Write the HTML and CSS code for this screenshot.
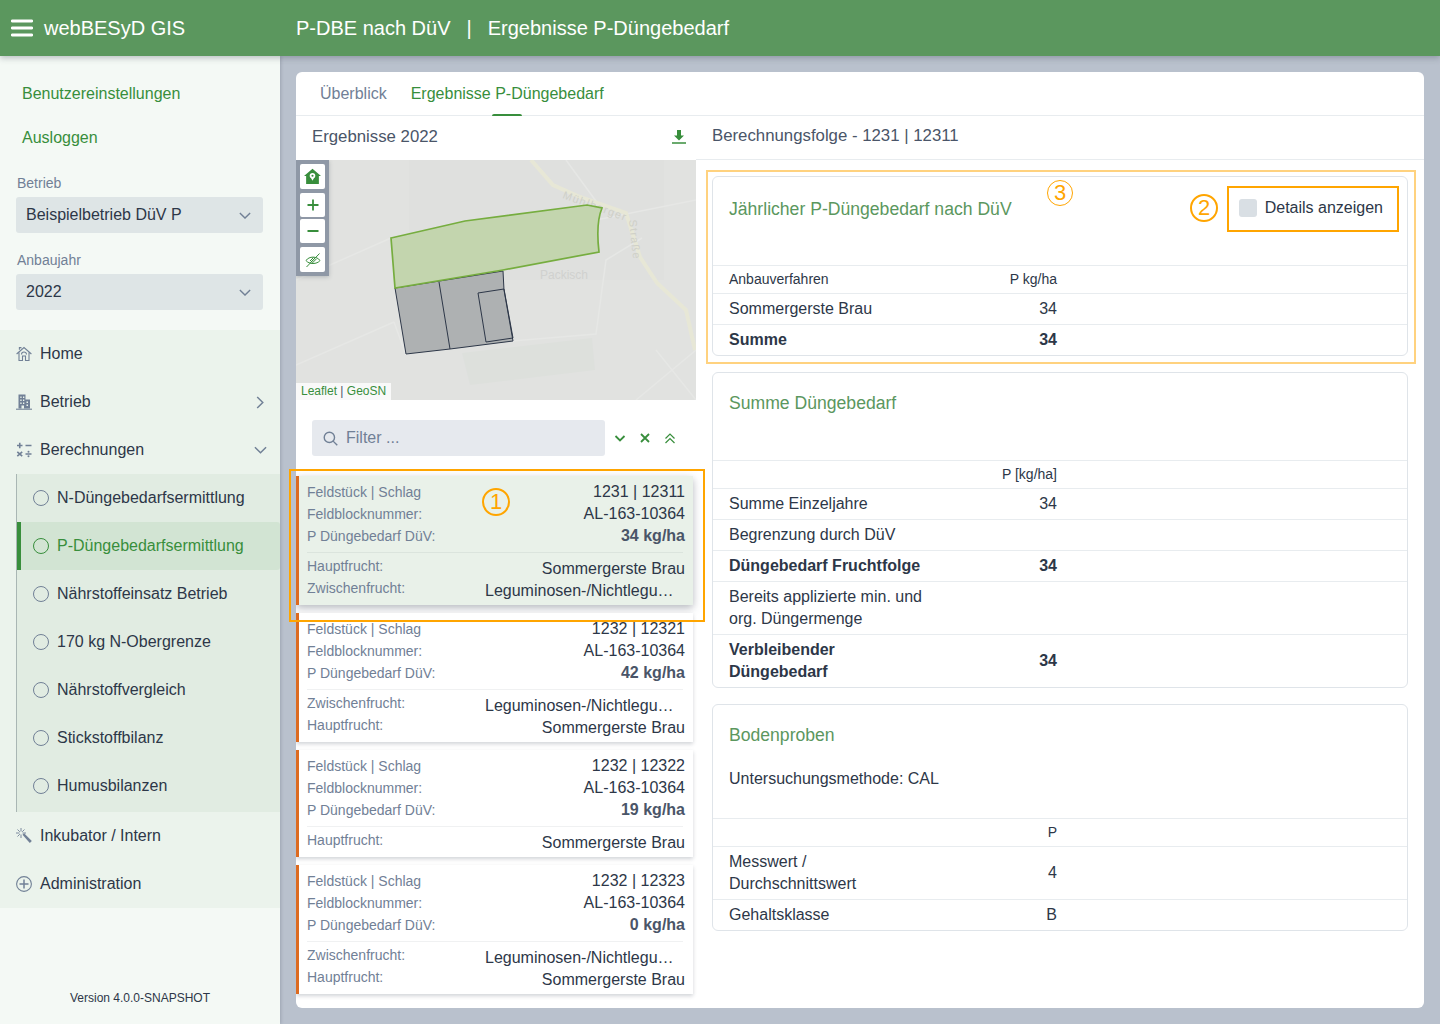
FILE: index.html
```html
<!DOCTYPE html>
<html lang="de">
<head>
<meta charset="utf-8">
<title>webBESyD GIS</title>
<link rel="stylesheet" href="styles.css">
</head>
<body>
<div class="app">
  <header class="topbar">
    <div class="brand">
      <svg class="burger" viewBox="0 0 22 18" width="22" height="18"><path d="M1.2 2h19.6M1.2 9h19.6M1.2 16h19.6" fill="none" stroke="#fff" stroke-width="2.8" stroke-linecap="round"/></svg>
      <span>webBESyD GIS</span>
    </div>
    <div class="crumbs"><span>P-DBE nach DüV</span><span class="sep">|</span><span>Ergebnisse P-Düngebedarf</span></div>
  </header>
  <div class="body">
    <aside class="sidebar">
      <a class="user-link first">Benutzereinstellungen</a>
      <a class="user-link">Ausloggen</a>
      <label class="field-label">Betrieb</label>
      <div class="select"><span>Beispielbetrieb DüV P</span><svg viewBox="0 0 14 8" width="12" height="7"><path d="M1 1l6 6 6-6" fill="none" stroke="#718096" stroke-width="1.6"/></svg></div>
      <label class="field-label second">Anbaujahr</label>
      <div class="select"><span>2022</span><svg viewBox="0 0 14 8" width="12" height="7"><path d="M1 1l6 6 6-6" fill="none" stroke="#718096" stroke-width="1.6"/></svg></div>
      <nav class="nav">
        <div class="nav-item">
          <svg class="nav-icon" viewBox="0 0 16 16"><path d="M.6 8L8 1.600 15.400 8M3 6.400V14.500h3.500V10h3v4.500H13V6.400M3.400 3.800V1.500h1.500v1M5.500 8.500a2.500 2.500 0 0 1 5 0" fill="none" stroke="#718096" stroke-width="1.100"/></svg>
          <span>Home</span>
        </div>
        <div class="nav-item">
          <svg class="nav-icon" viewBox="0 0 16 16"><path d="M2.500 .5h7v5H14v9H2.500z" fill="#718096"/><path d="M0 15.200h16" stroke="#718096" stroke-width="1.100"/><path d="M4.300 2.500h1.300V4H4.300zM7 2.500h1.300V4H7zM4.300 5.500h1.300V7H4.300zM7 5.500h1.300V7H7zM10.500 7.500h1.500V9h-1.500zM4.300 8.500h1.300V10H4.300zM7 8.500h1.300V10H7zM10.500 10.500h1.500V12h-1.500zM5.500 11.500h2.500v3H5.500z" fill="#ebf3ec"/></svg>
          <span>Betrieb</span>
          <svg class="chev-right" viewBox="0 0 8 14" width="8" height="13"><path d="M1 1l6 6-6 6" fill="none" stroke="#718096" stroke-width="1.600"/></svg>
        </div>
        <div class="nav-item">
          <svg class="nav-icon" viewBox="0 0 16 16"><path d="M1 3.500h5.500M3.750 .8v5.400M9.500 3.500h6M1.300 9.800l4.900 4.400M6.200 9.800l-4.900 4.400M9.500 12h6" fill="none" stroke="#718096" stroke-width="1.600"/><circle cx="12.500" cy="9.800" r="1" fill="#718096"/><circle cx="12.500" cy="14.200" r="1" fill="#718096"/></svg>
          <span>Berechnungen</span>
          <svg class="chev-down" viewBox="0 0 14 8" width="13" height="8"><path d="M1 1l6 6 6-6" fill="none" stroke="#718096" stroke-width="1.600"/></svg>
        </div>
        <div class="subnav">
          <div class="sub-item"><i class="ring"></i><span>N-Düngebedarfsermittlung</span></div>
          <div class="sub-item active"><i class="ring"></i><span>P-Düngebedarfsermittlung</span></div>
          <div class="sub-item"><i class="ring"></i><span>Nährstoffeinsatz Betrieb</span></div>
          <div class="sub-item"><i class="ring"></i><span>170 kg N-Obergrenze</span></div>
          <div class="sub-item"><i class="ring"></i><span>Nährstoffvergleich</span></div>
          <div class="sub-item"><i class="ring"></i><span>Stickstoffbilanz</span></div>
          <div class="sub-item"><i class="ring"></i><span>Humusbilanzen</span></div>
        </div>
        <div class="nav-item">
          <svg class="nav-icon" viewBox="0 0 16 16"><path d="M6.500 6.800l1.600-1.600 7.700 7.800-2 2z" fill="#718096"/><path d="M5 0v3.500M5 6.500V10M0 5h3.500M6.500 5H10M1.500 1.500l2.300 2.300M8.500 1.500L6.200 3.800M1.500 8.500l2.300-2.300" fill="none" stroke="#718096" stroke-width=".9"/></svg>
          <span>Inkubator / Intern</span>
        </div>
        <div class="nav-item">
          <svg class="nav-icon" viewBox="0 0 16 16"><circle cx="8" cy="8" r="7.400" fill="none" stroke="#718096" stroke-width="1.100"/><path d="M8 3.500v9M3.500 8h9" stroke="#718096" stroke-width="1.500"/></svg>
          <span>Administration</span>
        </div>
      </nav>
      <div class="version">Version 4.0.0-SNAPSHOT</div>
    </aside>
    <main class="main">
      <section class="panel">
        <div class="tabs">
          <span class="tab">Überblick</span>
          <span class="tab current">Ergebnisse P-Düngebedarf</span>
        </div>
        <div class="columns">
          <div class="left">
            <div class="left-head">
              <span>Ergebnisse 2022</span>
              <svg viewBox="0 0 14 14" width="14" height="14"><path d="M5 0h4v5.500h3L7 10.500 2 5.500h3z" fill="#388e3c"/><path d="M0 13h14" stroke="#388e3c" stroke-width="1.600"/></svg>
            </div>
            <div class="map">
              <svg class="map-art" viewBox="0 0 400 240" width="400" height="240">
                <rect width="400" height="240" fill="#e1e2e0"/>
                <rect x="113" y="0" width="255" height="120" fill="#dfe0de"/>
                <path d="M174 225l125-15-3-32-130 15z" fill="#dde0dc"/>
                <path d="M0 120L95 78M0 205L98 162M110 195L98 162M120 175C170 170 200 150 216 181M216 181L300 174 310 100 346 78M305 48L270 0M400 240L360 190M400 190L340 240M300 60L400 40" fill="none" stroke="#e6e7e5" stroke-width="1.500"/>
                <path d="M235 0L257 25 284 37 330 53 344 97 361 123 390 150 399 190" fill="none" stroke="#e7e7d6" stroke-width="4"/>
                <text class="map-label" x="268" y="119" text-anchor="middle">Packisch</text>
                <text class="map-road" transform="translate(266 38) rotate(20)">Mühlberger</text>
                <text class="map-road" transform="translate(333 60) rotate(84)">Straße</text>
                <path d="M99 128L207 111 208 130 217 181 154 189 110 194z" fill="#aeb1b2" stroke="#2d3748" stroke-width="1"/>
                <path d="M143 122L154 189M182 133L208 129 217 178 190 182z" fill="none" stroke="#2d3748" stroke-width="1"/>
                <path d="M95 78L169 61 291 45 306 48C301 60 301 75 303 92L207 110 99 128z" fill="#c3d5ae" stroke="#76ad3f" stroke-width="1.700"/>
              </svg>
              <div class="map-controls">
                <button class="map-btn"><svg viewBox="0 0 16 16" width="17" height="17"><path d="M8 .8L16 7.500h-2v7.500H2V7.500H0z" fill="#388e3c"/><circle cx="8" cy="7.300" r="2.600" fill="#fff"/><circle cx="8" cy="7.300" r="1" fill="#388e3c"/><path d="M6.400 9l1.600 3 1.600-3z" fill="#fff"/></svg></button>
                <button class="map-btn zoom"><svg viewBox="0 0 12 12" width="12" height="12"><path d="M6 .5v11M.5 6h11" stroke="#388e3c" stroke-width="1.800"/></svg></button>
                <button class="map-btn zoom out"><svg viewBox="0 0 12 12" width="12" height="12"><path d="M.5 6h11" stroke="#388e3c" stroke-width="1.800"/></svg></button>
                <button class="map-btn hide"><svg viewBox="0 0 16 16" width="16" height="16"><path d="M1 8.500c3-4.500 11-4.500 14 0-3 4-11 4-14 0z" fill="none" stroke="#388e3c" stroke-width="1"/><path d="M5.500 10.500l5-5M7 11.300l4.500-4.500M5 9l3.500-3.500" stroke="#388e3c" stroke-width="1"/><path d="M1.500 15L14.500 1.500" stroke="#388e3c" stroke-width="1"/></svg></button>
              </div>
              <div class="attribution"><a>Leaflet</a> | <a>GeoSN</a></div>
            </div>
            <div class="filter-row">
              <div class="filter">
                <svg viewBox="0 0 16 16" width="15" height="15"><circle cx="6.800" cy="6.800" r="5.500" fill="none" stroke="#718096" stroke-width="1.500"/><path d="M10.800 10.800l4.400 4.400" stroke="#718096" stroke-width="1.500"/></svg>
                <span>Filter ...</span>
              </div>
              <div class="filter-tools">
                <svg viewBox="0 0 12 12" width="12" height="12"><path d="M1.500 4l4.500 4.500L10.500 4" fill="none" stroke="#388e3c" stroke-width="1.800"/></svg>
                <svg viewBox="0 0 12 12" width="12" height="12"><path d="M2 2l8 8M10 2l-8 8" fill="none" stroke="#388e3c" stroke-width="1.800"/></svg>
                <svg viewBox="0 0 12 12" width="12" height="12"><path d="M1.500 6.500L6 2l4.500 4.500M1.500 11L6 6.500l4.500 4.500" fill="none" stroke="#388e3c" stroke-width="1.200"/></svg>
              </div>
            </div>
            <div class="field-list">
              <article class="field selected">
                <div class="line"><span>Feldstück | Schlag</span><b>1231 | 12311</b></div>
                <div class="line"><span>Feldblocknummer:</span><b>AL-163-10364</b></div>
                <div class="line"><span>P Düngebedarf DüV:</span><b class="strong">34 kg/ha</b></div>
                <hr>
                <div class="line"><span>Hauptfrucht:</span><b>Sommergerste Brau</b></div>
                <div class="line"><span>Zwischenfrucht:</span><b class="clip">Leguminosen-/Nichtleguminosen</b></div>
              </article>
              <article class="field">
                <div class="line"><span>Feldstück | Schlag</span><b>1232 | 12321</b></div>
                <div class="line"><span>Feldblocknummer:</span><b>AL-163-10364</b></div>
                <div class="line"><span>P Düngebedarf DüV:</span><b class="strong">42 kg/ha</b></div>
                <hr>
                <div class="line"><span>Zwischenfrucht:</span><b class="clip">Leguminosen-/Nichtleguminosen</b></div>
                <div class="line"><span>Hauptfrucht:</span><b>Sommergerste Brau</b></div>
              </article>
              <article class="field">
                <div class="line"><span>Feldstück | Schlag</span><b>1232 | 12322</b></div>
                <div class="line"><span>Feldblocknummer:</span><b>AL-163-10364</b></div>
                <div class="line"><span>P Düngebedarf DüV:</span><b class="strong">19 kg/ha</b></div>
                <hr>
                <div class="line"><span>Hauptfrucht:</span><b>Sommergerste Brau</b></div>
              </article>
              <article class="field">
                <div class="line"><span>Feldstück | Schlag</span><b>1232 | 12323</b></div>
                <div class="line"><span>Feldblocknummer:</span><b>AL-163-10364</b></div>
                <div class="line"><span>P Düngebedarf DüV:</span><b class="strong">0 kg/ha</b></div>
                <hr>
                <div class="line"><span>Zwischenfrucht:</span><b class="clip">Leguminosen-/Nichtleguminosen</b></div>
                <div class="line"><span>Hauptfrucht:</span><b>Sommergerste Brau</b></div>
              </article>
            </div>
          </div>
          <div class="right">
            <div class="right-head">Berechnungsfolge - 1231 | 12311</div>
            <div class="right-body">
              <section class="box first">
                <div class="box-head">
                  <h2>Jährlicher P-Düngebedarf nach DüV</h2>
                  <label class="check"><i></i><span>Details anzeigen</span></label>
                </div>
                <div class="row head"><span>Anbauverfahren</span><span class="num">P kg/ha</span></div>
                <div class="row"><span>Sommergerste Brau</span><span class="num">34</span></div>
                <div class="row bold"><span>Summe</span><span class="num">34</span></div>
              </section>
              <section class="box">
                <div class="box-head"><h2>Summe Düngebedarf</h2></div>
                <div class="row head"><span></span><span class="num">P [kg/ha]</span></div>
                <div class="row"><span>Summe Einzeljahre</span><span class="num">34</span></div>
                <div class="row"><span>Begrenzung durch DüV</span><span class="num"></span></div>
                <div class="row bold"><span>Düngebedarf Fruchtfolge</span><span class="num">34</span></div>
                <div class="row"><span>Bereits applizierte min. und org. Düngermenge</span><span class="num"></span></div>
                <div class="row bold"><span>Verbleibender Düngebedarf</span><span class="num">34</span></div>
              </section>
              <section class="box">
                <div class="box-head tall">
                  <h2>Bodenproben</h2>
                  <p>Untersuchungsmethode: CAL</p>
                </div>
                <div class="row head"><span></span><span class="num">P</span></div>
                <div class="row"><span>Messwert / Durchschnittswert</span><span class="num">4</span></div>
                <div class="row"><span>Gehaltsklasse</span><span class="num">B</span></div>
              </section>
            </div>
          </div>
        </div>
      </section>
    </main>
  </div>
  <div class="mark mark-one"></div>
  <div class="mark mark-two"></div>
  <div class="mark mark-three"></div>
  <div class="badge badge-one">1</div>
  <div class="badge badge-two">2</div>
  <div class="badge badge-three">3</div>
</div>
</body>
</html>
```
FILE: styles.css
```css
* { box-sizing: border-box; }
html, body { margin: 0; height: 100%; }
body {
  font-family: "Liberation Sans", Arial, sans-serif;
  font-size: 16px;
  line-height: 22px;
  color: #2d3748;
  overflow: hidden;
}
.app { position: relative; width: 1440px; height: 1024px; display: flex; flex-direction: column; background: #b9c1cd; overflow: hidden; }

.topbar {
  height: 56px; flex: none; display: flex; align-items: center;
  background: #5b975e; color: #fff; font-size: 20px;
  box-shadow: 0 2px 6px rgba(45, 55, 72, .3); position: relative; z-index: 3;
}
.brand { width: 296px; padding-left: 11px; display: flex; align-items: center; gap: 11px; }
.burger { flex: none; }
.crumbs { display: flex; gap: 16px; }
.sep { display: inline-block; }

.body { flex: 1; display: flex; min-height: 0; }

.sidebar {
  width: 280px; flex: none; display: flex; flex-direction: column;
  background: #f4f9f5; box-shadow: 1px 0 3px rgba(45, 55, 72, .2);
  position: relative; z-index: 2;
}
.user-link { display: block; height: 44px; line-height: 44px; padding-left: 22px; color: #388e3c; }
.user-link.first { margin-top: 16px; }
.field-label { display: block; margin: 12px 0 3px 17px; font-size: 14px; line-height: 22px; color: #718096; }
.field-label.second { margin-top: 16px; }
.select {
  width: 247px; height: 36px; margin-left: 16px; padding: 0 12px 0 10px;
  display: flex; align-items: center; justify-content: space-between;
  background: #dee5e6; border-radius: 3px;
}
.nav { margin-top: 20px; background: #ebf3ec; }
.nav-item { height: 48px; padding-left: 16px; display: flex; align-items: center; gap: 8px; }
.nav-icon { width: 16px; height: 16px; flex: none; }
.chev-right { margin-left: auto; margin-right: 16px; }
.chev-down { margin-left: auto; margin-right: 13px; }
.subnav { margin-left: 16px; padding-bottom: 2px; background: #e1ece2; border-left: 1px solid #a9b6b4; }
.sub-item { height: 48px; padding-left: 16px; display: flex; align-items: center; gap: 8px; }
.sub-item.active { background: #d2e4d3; color: #388e3c; border-left: 4px solid #388e3c; padding-left: 12px; border-radius: 0 3px 3px 0; }
.ring { width: 16px; height: 16px; flex: none; border: 1px solid #718096; border-radius: 50%; }
.active .ring { border-color: #388e3c; }
.version { margin-top: auto; padding-bottom: 15px; text-align: center; font-size: 12px; line-height: 22px; }

.main { flex: 1; padding: 16px; min-width: 0; }
.panel { height: 936px; background: #fff; border-radius: 6px; overflow: hidden; }
.tabs { height: 44px; padding-left: 12px; display: flex; border-bottom: 1px solid #e8ecef; }
.tab { padding: 0 12px; height: 44px; line-height: 44px; color: #718096; position: relative; }
.tab.current { color: #388e3c; }
.tab.current::after { content: ""; position: absolute; left: 93px; bottom: 0; width: 30px; height: 2px; background: #388e3c; border-radius: 2px 2px 0 0; }

.columns { display: flex; }
.left { width: 400px; flex: none; }
.left-head { height: 44px; padding: 0 10px 3px 16px; display: flex; align-items: center; justify-content: space-between; font-size: 16.8px; color: #4a5568; }

.map { position: relative; width: 400px; height: 240px; overflow: hidden; }
.map-art { display: block; }
.map-label { font-family: "Liberation Sans", Arial, sans-serif; font-size: 12px; fill: #d0d1cf; }
.map-road { font-family: "Liberation Sans", Arial, sans-serif; font-size: 11px; letter-spacing: 1.2px; fill: #cfd0c8; }
.map-controls {
  position: absolute; left: 0; top: 0; width: 33px; height: 116px; padding: 4px 0 0 4px;
  background: #8f98a6; box-shadow: 0 1px 4px rgba(45, 55, 72, .25); display: flex; flex-direction: column;
}
.map-btn { width: 25px; height: 25px; padding: 0; border: 0; background: #fff; border-radius: 2px; display: flex; align-items: center; justify-content: center; }
.map-btn.zoom { height: 24px; margin-top: 4px; }
.map-btn.zoom.out { margin-top: 2px; }
.map-btn.hide { margin-top: 4px; }
.attribution { position: absolute; left: 0; bottom: 0; width: 95px; height: 17px; padding-left: 5px; background: rgba(255, 255, 255, .8); font-size: 12px; line-height: 17px; color: #4a5568; }
.attribution a { color: #388e3c; }

.filter-row { height: 76px; padding: 20px 0 0 16px; display: flex; }
.filter { width: 293px; height: 36px; padding-left: 11px; display: flex; align-items: center; gap: 8px; background: #e6e9ee; border-radius: 3px; color: #718096; }
.filter-tools { display: flex; align-items: center; height: 36px; gap: 13px; margin-left: 9px; }

.field-list { display: flex; flex-direction: column; gap: 8px; }
.field { width: 397px; padding: 5px 8px 5px 8px; background: #fff; border-left: 3px solid #dd6b20; box-shadow: 0 2px 4px rgba(45, 55, 72, .22); }
.field.selected { background: #e9f1e9; box-shadow: 0 3px 8px rgba(45, 55, 72, .35); }
.line { display: flex; justify-content: space-between; align-items: flex-start; height: 22px; line-height: 22px; white-space: nowrap; }
.line span { font-size: 14px; color: #718096; }
.line b { font-weight: 400; }
.line b.strong { font-weight: 700; color: #4a5568; }
.line b.clip { width: 200px; overflow: hidden; text-overflow: ellipsis; }
.field hr { height: 1px; margin: 5px 2px 3px 0; border: 0; background: rgba(45, 55, 72, .07); }
.field hr ~ .line span { line-height: 20px; }
.field hr ~ .line b { line-height: 26px; }

.right { flex: 1; min-width: 0; }
.right-head { height: 44px; padding: 0 16px 3px; display: flex; align-items: center; font-size: 16.8px; color: #4a5568; border-bottom: 1px solid #e8ecef; }
.right-body { padding: 16px; display: flex; flex-direction: column; gap: 16px; }
.box { border: 1px solid #dfe4e9; border-radius: 6px; overflow: hidden; }
.box-head { height: 87px; padding: 16px 16px 0; display: flex; justify-content: space-between; align-items: flex-start; }
.box.first .box-head { height: 88px; }
.box-head.tall { height: 113px; display: block; }
.box-head h2 { margin: 0; font-size: 17.6px; line-height: 28px; font-weight: 400; color: #5b975e; }
.box.first .box-head h2 { margin-top: 2px; }
.box-head.tall h2 { margin-top: 0; }
.box-head p { margin: 19px 0 0; }
.check { display: flex; align-items: center; gap: 8px; margin: 6px 8px 0 0; height: 18px; }
.check i { width: 18px; height: 18px; background: #d9dfe4; border-radius: 3px; }
.row { display: grid; grid-template-columns: 200px 128px; column-gap: 0; padding: 4px 0 4px 16px; border-top: 1px solid #e8ecef; }
.row .num { text-align: right; align-self: center; }
.row.head { font-size: 14px; line-height: 19px; }
.row.bold { font-weight: 700; }

.mark, .badge { position: absolute; pointer-events: none; }
.mark { border: 2px solid #ffa500; z-index: 5; }
.mark-one { left: 289px; top: 469px; width: 416px; height: 153px; }
.mark-two { left: 1227px; top: 186px; width: 172px; height: 46px; }
.mark-three { left: 706px; top: 170px; width: 710px; height: 194px; border-color: #ffd27f; }
.badge { z-index: 6; display: flex; align-items: center; justify-content: center; border-radius: 50%; color: #ffa500; font-size: 22px; border: 2px solid #ffa500; }
.badge-one { left: 482px; top: 488px; width: 28px; height: 28px; }
.badge-two { left: 1190px; top: 194px; width: 28px; height: 28px; }
.badge-three { left: 1047px; top: 180px; width: 26px; height: 26px; border-width: 1px; }
```
